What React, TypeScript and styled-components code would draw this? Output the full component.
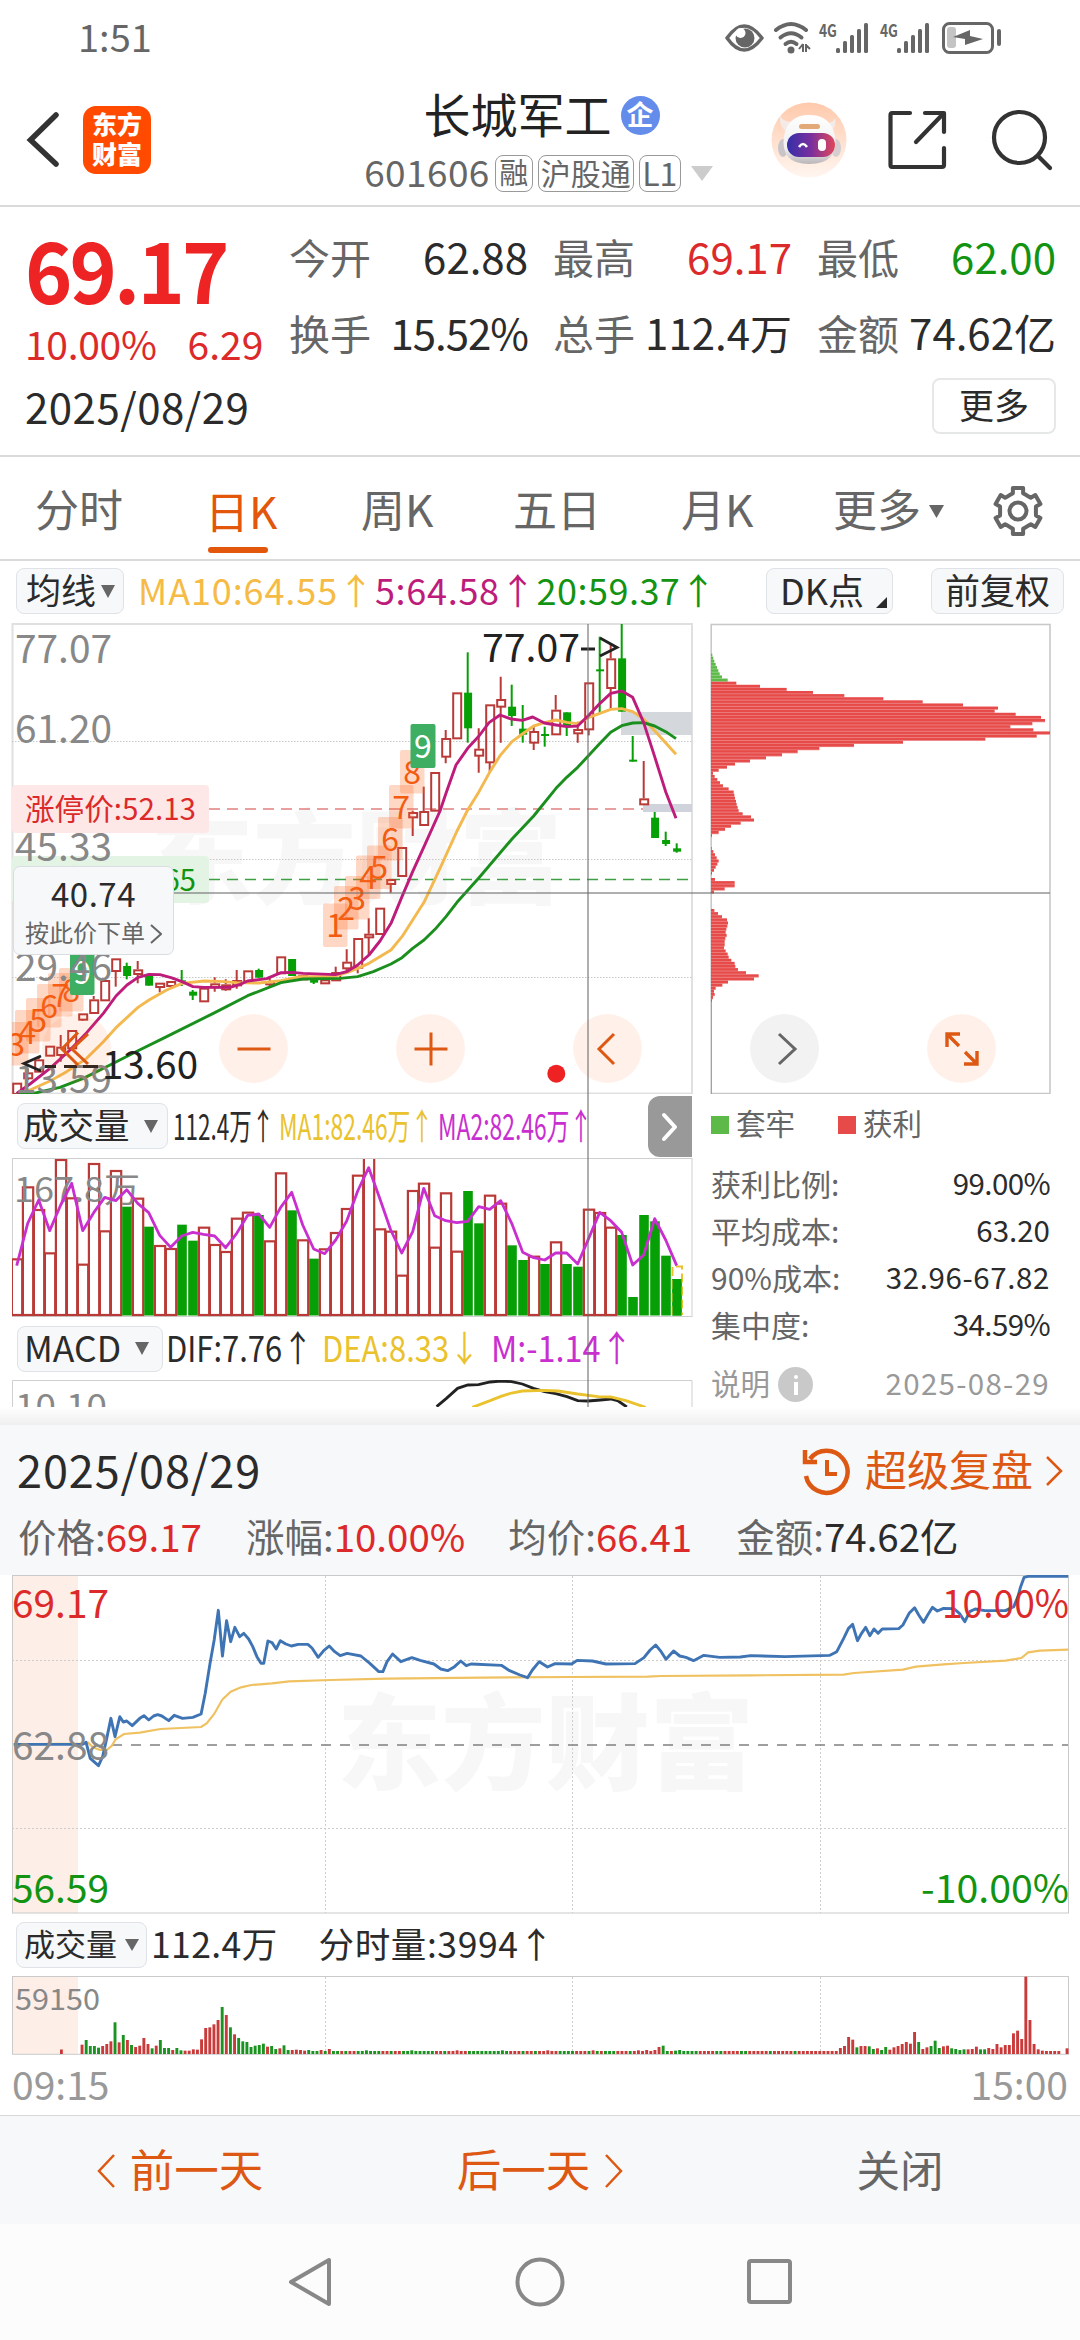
import React from 'react';
import styled, { createGlobalStyle } from 'styled-components';

const Global = createGlobalStyle`
  * { box-sizing: border-box; }
  html, body { margin: 0; padding: 0; background: #fff; }
  body, text { font-family: "Noto Sans CJK SC", "Noto Sans", sans-serif; }
  svg { display: block; flex: none; }
`;

const C = {
  red: '#dc2a2a', green: '#129412', ink: '#2b2b2b', grey: '#666', pale: '#999',
  accent: '#dd5812', candle: '#b93a37', fillGreen: '#06a006',
  ma5: '#bd1c7b', ma10: '#f3b94f', ma20: '#1b8f1e', purple: '#c92fcf', yellow: '#eac22e',
};

/* ---------- shared pieces ---------- */

const Screen = styled.div`
  width: 1080px; height: 2340px; overflow: hidden; background: #fff;
  display: flex; flex-direction: column;
`;

const Txt = styled.span<{ s: number; c?: string; w?: number; ls?: number; ml?: number }>`
  font-size: ${p => p.s}px; line-height: 1; white-space: pre; flex: none;
  margin-top: -0.12em; margin-left: ${p => p.ml ?? 0}px;
  color: ${p => p.c ?? C.ink}; font-weight: ${p => p.w ?? 400};
  letter-spacing: ${p => p.ls ?? 0}px;
`;

const Narrow = styled(Txt)<{ k: number; width: number }>`
  display: inline-block; transform: scaleX(${p => p.k}); transform-origin: 0 50%;
  width: ${p => p.width / p.k}px; margin-right: ${p => p.width - p.width / p.k}px;
`;

const Chip = styled.div<{ w: number; h?: number; pl?: number; gap?: number }>`
  width: ${p => p.w}px; height: ${p => p.h ?? 46}px; flex: none;
  display: flex; align-items: center; gap: ${p => p.gap ?? 0}px; padding-left: ${p => p.pl ?? 9}px;
  background: #f7f8fa; border: 1.5px solid #dfe2e7; border-radius: 8px;
`;
const DkChip = styled(Chip)` margin-left: auto; `;
const AdjustChip = styled(Chip)` margin: 0 16px 0 38px; `;

const Caret = ({ w = 15, h = 13, c = C.grey }: { w?: number; h?: number; c?: string }) => (
  <svg width={w} height={h}><path d={`M0 0H${w}L${w / 2} ${h}Z`} fill={c} /></svg>
);

const Label = ({ x, cy, s, c = '#888', w, end, weight, children }: {
  x: number; cy: number; s: number; c?: string; w?: number; end?: boolean; weight?: number; children: React.ReactNode;
}) => (
  <text x={x} y={cy + s * 0.367} fontSize={s} fill={c} fontWeight={weight}
    textAnchor={end ? 'end' : 'start'} textLength={w} lengthAdjust="spacingAndGlyphs">{children}</text>
);

/* ---------- status bar ---------- */

const StatusBar = styled.div`
  height: 72px; padding: 4px 78px 0 78px; display: flex; align-items: center; justify-content: space-between;
`;

const Signal = ({ x }: { x: number }) => (
  <g>
    <text x={x} y={36} fontSize={17} fontWeight={700} fill={C.grey} textLength={18} lengthAdjust="spacingAndGlyphs">4G</text>
    {[5, 12, 18, 24, 30].map((h, i) => (
      <rect key={i} x={x + 17 + i * 7} y={52 - h} width={4} height={h} rx={1.5} fill={C.grey} />
    ))}
  </g>
);

const StatusIcons = () => (
  <svg width="280" height="40" viewBox="722 17 280 40">
    <path d="M727 37Q744 13 762 37Q744 61 727 37Z" fill="none" stroke={C.grey} strokeWidth="3.500" strokeLinejoin="round" />
    <circle cx="745" cy="37" r="9.500" fill={C.grey} />
    <circle cx="740.500" cy="32" r="5" fill="#fff" />
    <g fill="none" stroke={C.grey} strokeWidth="4" strokeLinecap="round">
      <path d="M776 29Q791 17 806 29" /><path d="M780.500 36.500Q791 28 801.500 36.500" /><path d="M785.500 43Q791 38.500 796.500 43" />
    </g>
    <circle cx="791" cy="49" r="3.500" fill={C.grey} />
    <path d="M803 43V51M799 48L803 43M806 43V51M806 44L810 48" stroke={C.grey} strokeWidth="2" fill="none" />
    <Signal x={819} /><Signal x={880} />
    <rect x="943.500" y="22.500" width="49" height="29" rx="6" fill="none" stroke={C.grey} strokeWidth="3" />
    <rect x="947" y="26" width="9" height="21" rx="3" fill="#c4c4c4" />
    <path d="M953 36L970 29V35L983 38L965 44V38Z" fill={C.grey} />
    <rect x="997" y="28" width="4" height="17" rx="2" fill={C.grey} />
  </svg>
);

/* ---------- header ---------- */

const Header = styled.header`
  height: 135px; border-bottom: 2px solid #dadada; display: grid; grid-template-columns: 340px 400px 340px;
`;
const HeadLeft = styled.div`
  display: flex; align-items: flex-start; padding: 34px 0 0 26px; gap: 23px;
`;
const Logo = styled.div`
  width: 68px; height: 68px; border-radius: 13px; background: #ff4a00;
  display: flex; flex-wrap: wrap; align-content: center; justify-content: center;
  color: #fff; font-size: 25px; font-weight: 900; line-height: 30px; text-align: center; padding: 0 8px 5px;
`;
const HeadMid = styled.div` display: flex; flex-direction: column; align-items: center; padding-top: 15px; `;
const TitleRow = styled.div` display: flex; align-items: center; height: 56px; gap: 9px; padding-left: 3px; `;
const CodeRow = styled.div` display: flex; align-items: center; height: 37px; gap: 5px; margin-top: 12px; padding-right: 3px; `;
const TagCaret = styled.div` margin-left: 5px; `;
const Badge = styled.div`
  width: 39px; height: 39px; border-radius: 50%; background: #648cea; display: flex; align-items: center; justify-content: center;
`;
const Tag = styled.div<{ w: number }>`
  width: ${p => p.w}px; height: 37px; border: 1.5px solid #999; border-radius: 8px; flex: none;
  display: flex; align-items: center; justify-content: center;
`;
const HeadRight = styled.div` display: flex; align-items: flex-start; padding: 30px 0 0 31px; `;

const Robot = () => (
  <svg width="76" height="76" viewBox="0 0 76 76">
    <defs>
      <linearGradient id="halo" x1="0" y1="0" x2="0" y2="1"><stop offset="0" stopColor="#ffc9ab" /><stop offset="1" stopColor="#fff6f0" /></linearGradient>
      <linearGradient id="visor"><stop offset="0" stopColor="#352fa8" /><stop offset=".5" stopColor="#7a2f9e" /><stop offset="1" stopColor="#e0485a" /></linearGradient>
      <linearGradient id="shell" x1="0" y1="0" x2="0" y2="1"><stop offset="0" stopColor="#fff" /><stop offset=".7" stopColor="#f0eeee" /><stop offset="1" stopColor="#b9b5b8" /></linearGradient>
    </defs>
    <circle cx="38" cy="38" r="37.500" fill="url(#halo)" />
    <path d="M9 14Q8 26 17 30L24 19Q14 22 9 14ZM64 16Q66 26 58 30L53 20Q61 23 64 16Z" fill="#f4ebe8" />
    <ellipse cx="12" cy="46" rx="5" ry="9" fill="#c9c4c8" /><ellipse cx="65" cy="46" rx="5" ry="9" fill="#d5ced0" />
    <path d="M38 13Q60 13 64 34Q68 62 38 62Q9 62 13 34Q17 13 38 13Z" fill="url(#shell)" />
    <rect x="28" y="22" width="21" height="5" rx="2.500" fill="#e3a878" />
    <rect x="16" y="31" width="48" height="24" rx="12" fill="url(#visor)" />
    <path d="M28 45Q32 39 36 45" stroke="#fff" strokeWidth="2.500" fill="none" />
    <rect x="47" y="37" width="8" height="12" rx="4" fill="#fff" />
  </svg>
);

const HeadIcon = styled.svg<{ ml: number }>`
  margin-left: ${p => p.ml}px; margin-top: 6px; fill: none; stroke: #333; stroke-width: 4.2px; stroke-linecap: round; stroke-linejoin: round;
`;

const ShareIcon = () => (
  <HeadIcon ml={39} width="62" height="62" viewBox="0 0 62 62">
    <path d="M24 5H6Q4.500 5 4.500 7V57Q4.500 59 6 59H56Q58 59 58 57V40" /><path d="M39 5H58V24" /><path d="M57 6L30 34" />
  </HeadIcon>
);

const SearchIcon = () => (
  <HeadIcon ml={42} width="64" height="64" viewBox="0 0 64 64">
    <circle cx="29.500" cy="29.500" r="25.500" /><path d="M48 48L60 60" />
  </HeadIcon>
);

/* ---------- quote ---------- */

const Quote = styled.section` height: 250px; border-bottom: 2px solid #dadada; display: flex; `;
const QuoteLeft = styled.div` width: 289px; padding: 22px 0 0 25px; flex: none; `;
const QLine = styled.div<{ h: number }>` height: ${p => p.h}px; display: flex; align-items: center; `;
const QuoteRight = styled.div` flex: 1; padding: 14px 24px 0 0; display: flex; flex-direction: column; align-items: flex-end; `;
const Stats = styled.div`
  width: 767px; display: grid; grid-template-columns: repeat(3, 239px); column-gap: 25px; grid-auto-rows: 76px;
`;
const Stat = styled.div` display: flex; justify-content: space-between; align-items: center; `;
const MoreButton = styled.div`
  width: 124px; height: 56px; margin-top: 5px; border: 2px solid #e6e8e8; border-radius: 8px; display: flex; align-items: center; justify-content: center;
`;

const stats: [string, string, string, number][] = [
  ['今开', '62.88', C.ink, 0], ['最高', '69.17', C.red, 0], ['最低', '62.00', C.green, 0],
  ['换手', '15.52%', C.ink, -1], ['总手', '112.4万', C.ink, 0], ['金额', '74.62亿', C.ink, 0],
];

/* ---------- tabs ---------- */

const Tabs = styled.nav` height: 104px; border-bottom: 2px solid #dadada; display: flex; padding-left: 35px; `;
const Tab = styled.div<{ w: number }>` width: ${p => p.w}px; height: 102px; display: flex; align-items: center; gap: 8px; padding-top: 6px; `;
const ActiveTab = styled(Tab)`
  flex-direction: column; align-items: flex-start; padding-top: 36px; gap: 15px; justify-content: flex-start;
  &::after { content: ''; width: 60px; height: 6px; border-radius: 3px; background: #e2570c; margin-left: 3px; }
`;
const GearIcon = () => {
  const pts: string[] = [];
  for (let i = 0; i < 6; i++) {
    const a = (i * 60 - 90) * Math.PI / 180;
    [[-0.42, 18], [-0.28, 18.5], [-0.22, 23.5], [0.22, 23.5], [0.28, 18.5], [0.42, 18]].forEach(([d, r]) =>
      pts.push(`${26 + r * Math.cos(a + d)},${26 + r * Math.sin(a + d)}`));
  }
  return (
    <svg width="52" height="52" fill="none" stroke={C.grey} strokeWidth="4">
      <polygon points={pts.join(' ')} strokeLinejoin="round" /><circle cx="26" cy="26" r="8.500" />
    </svg>
  );
};

const Averages = styled.div` height: 62px; display: flex; align-items: center; padding-left: 16px; padding-bottom: 2px; `;
const Corner = styled.i`
  align-self: flex-end; margin: 0 0 5px 12px; border: solid transparent; border-width: 0 0 11px 11px; border-bottom-color: #2b2b2b;
`;

/* ---------- candlestick chart ---------- */

const ChartArea = styled.section` position: relative; height: 784px; overflow: hidden; display: flex; flex: none; `;
const LeftCol = styled.div` width: 693px; flex: none; `;
const RightCol = styled.div` width: 342px; margin-left: 17px; flex: none; `;

// kind, body top, body bottom, wick top, wick bottom; plot units are thirds of a pixel below y = 610
type Candle = [string, number, number, number, number];
const B = 570;
const candles: Candle[] = [
  ['r', B + 848, B + 882, B + 848, B + 882], ['r', B + 817, B + 835, B + 805, B + 840], ['r', B + 778, B + 815, B + 772, B + 815],
  ['r', B + 737, B + 767, B + 737, B + 767], ['r', B + 740, B + 765, B + 705, B + 785], ['r', B + 690, B + 745, B + 690, B + 745],
  ['r', B + 640, B + 659, B + 640, B + 662], ['r', B + 598, B + 639, B + 588, B + 639], ['r', B + 540, B + 601, B + 540, B + 601],
  ['r', B + 475, B + 513, B + 475, B + 560], ['g', B + 498, B + 528, B + 488, B + 538], ['r', B + 508, B + 522, B + 483, B + 550],
  ['g', B + 528, B + 557, B + 528, B + 557], ['r', B + 548, B + 561, B + 548, B + 577], ['r', B + 543, B + 558, B + 543, B + 558],
  ['g', B + 541, B + 545, B + 510, B + 558], ['g', B + 575, B + 587, B + 570, B + 600], ['r', B + 563, B + 604, B + 563, B + 604],
  ['r', B + 550, B + 562, B + 532, B + 575], ['r', B + 553, B + 568, B + 538, B + 572], ['r', B + 540, B + 556, B + 510, B + 566],
  ['r', B + 511, B + 545, B + 511, B + 545], ['g', B + 510, B + 533, B + 506, B + 533], ['r', B + 543, B + 553, B + 530, B + 560],
  ['r', B + 469, B + 520, B + 469, B + 520], ['g', B + 477, B + 528, B + 477, B + 528], ['r', B + 525, B + 538, B + 525, B + 538],
  ['g', B + 530, B + 548, B + 530, B + 552], ['r', B + 538, B + 550, B + 530, B + 550], ['r', B + 516, B + 541, B + 500, B + 541],
  ['r', 1055, 1075, 1018, 1085], ['r', 984, 1073, 984, 1090], ['r', 971, 982, 925, 1035], ['r', 893, 972, 893, 972],
  ['r', 807, 822, 807, 848], ['r', 711, 798, 711, 798], ['r', 606, 622, 602, 678], ['r', 603, 645, 530, 645],
  ['r', 486, 602, 486, 602], ['r', 384, 440, 360, 460], ['r', 247, 385, 247, 385], ['g', 248, 355, 127, 398],
  ['r', 416, 437, 355, 488], ['r', 283, 457, 283, 485], ['r', 267, 290, 200, 398], ['g', 290, 318, 224, 348],
  ['g', 356, 374, 285, 398], ['r', 363, 398, 350, 420], ['g', 372, 378, 350, 410], ['r', 299, 373, 255, 373],
  ['g', 307, 350, 307, 378], ['r', 357, 370, 335, 398], ['r', 217, 358, 217, 376], ['g', 178, 184, 80, 310],
  ['r', 145, 234, 100, 298], ['g', 145, 305, 42, 305], ['g', 449, 455, 378, 455], ['r', 565, 583, 453, 583],
  ['g', 623, 684, 606, 684], ['g', 690, 702, 665, 708], ['g', 715, 725, 700, 728],
];
const cx = (i: number) => 16.7 + 11 * i;

const left = (pts: number[][]) => pts.map(([x, y]) => `${x / 3},${800 + y / 3}`).join(' ');
const right = (pts: number[][]) => pts.map(([x, y]) => `${340 + x / 3},${610 + y / 3}`).join(' ');

const ma5 = left([[50, 880], [90, 852], [150, 805], [210, 750], [260, 698], [310, 640], [348, 588], [381, 555], [414, 532], [447, 523], [480, 524], [513, 533], [546, 545], [579, 560], [612, 562], [690, 562], [720, 553], [743, 543], [800, 536], [843, 518], [876, 517], [909, 520], [1006, 524]])
  + ' ' + right([[20, 1085], [53, 1065], [87, 1035], [120, 993], [153, 940], [186, 860], [218, 785], [252, 710], [300, 603], [318, 550], [348, 465], [383, 415], [417, 378], [447, 338], [480, 315], [513, 327], [547, 331], [578, 321], [613, 339], [648, 345], [681, 350], [713, 348], [747, 315], [780, 280], [812, 250], [845, 243], [878, 262], [911, 338], [944, 440], [977, 545], [1008, 625]]);
const ma10 = left([[50, 882], [90, 870], [150, 843], [200, 815], [260, 775], [310, 725], [348, 683], [414, 622], [447, 600], [500, 570], [546, 550], [612, 543], [660, 544], [710, 548], [777, 549], [843, 542], [900, 530], [1000, 530]])
  + ' ' + right([[20, 1088], [53, 1075], [87, 1060], [153, 1020], [186, 980], [252, 877], [300, 775], [351, 663], [383, 600], [417, 545], [450, 485], [480, 437], [516, 395], [547, 372], [581, 348], [613, 338], [648, 330], [681, 337], [713, 341], [747, 322], [812, 298], [845, 296], [878, 305], [911, 327], [944, 362], [1008, 433]]);
const ma20 = left([[50, 882], [110, 878], [180, 862], [250, 835], [330, 795], [414, 752], [500, 710], [640, 640], [743, 587], [843, 548], [909, 537]])
  + ' ' + right([[0, 1105], [53, 1100], [100, 1085], [153, 1062], [186, 1043], [218, 1015], [252, 990], [285, 958], [318, 920], [351, 877], [417, 803], [516, 687], [581, 618], [648, 535], [680, 502], [713, 472], [780, 400], [812, 367], [845, 347], [878, 339], [911, 338], [944, 348], [977, 365], [1008, 386]]);

const marks: [string, number, number][] = [
  ['8', 400, 750], ['7', 389, 785], ['6', 378, 817], ['5', 367, 845.5], ['4', 356, 855.5], ['3', 345, 876], ['2', 334, 886], ['1', 323, 903.5],
  ['8', 59, 968], ['7', 48, 973], ['6', 37, 984], ['5', 26, 998], ['4', 15, 1010], ['3', 4, 1022],
];

const KChart = () => (
  <svg width="693" height="471" viewBox="0 623 693 471">
    <clipPath id="plot"><rect x="12" y="623" width="681" height="471" /></clipPath>
    <Label x={150} cy={859} s={102} w={412} c="#f7f7f7" weight={900}>东方财富</Label>
    <rect x="12.500" y="624" width="679.500" height="469.500" fill="none" stroke="#e0e0e0" strokeWidth="2" />
    <g stroke="#c8c8c8" strokeDasharray="1.500 1.500"><path d="M12 741.500H692M12 859.500H692M12 977.500H692" /></g>
    <rect x="12" y="785" width="197" height="48" rx="4" fill="#fee7e7" />
    <rect x="12" y="856" width="197" height="47" rx="4" fill="#e4f4e4" />
    <Label x={25} cy={809} s={30} w={171} c={C.red}>涨停价:52.13</Label>
    <Label x={25} cy={880} s={30} w={171} c={C.green}>跌停价:42.65</Label>
    <path d="M209 809H690" stroke="#e08080" strokeWidth="1.500" strokeDasharray="11 7" />
    <path d="M209 879.500H690" stroke="#3f9f45" strokeWidth="1.500" strokeDasharray="11 7" />
    <rect x="621" y="712" width="71" height="23" fill="#d4d7dc" /><rect x="643" y="804" width="49" height="8" fill="#d0d2dc" />
    <g clipPath="url(#plot)">
      {candles.map(([k, t, b, hi, lo], i) => {
        const y = (v: number) => 610 + v / 3, x = cx(i);
        return k === 'g'
          ? <g key={i} fill={C.fillGreen}><rect x={x - 1} y={y(hi)} width={2} height={(lo - hi) / 3} /><rect x={x - 3.6} y={y(t)} width={8} height={(b - t) / 3} /></g>
          : <g key={i} stroke={C.candle} strokeWidth={2} fill="none"><path d={`M${x} ${y(hi)}V${y(t)}M${x} ${y(b)}V${y(lo)}`} /><rect x={x - 3.5} y={y(t) + 1} width={8} height={Math.max(1, (b - t) / 3 - 1)} /></g>;
      })}
      {marks.map(([n, x, y], i) => (
        <g key={i}><rect x={x} y={y} width={24.5} height={43.5} rx={2} fill="#ff6a2a" fillOpacity=".27" />
          <text x={x + 12.2} y={y + 33.5} fontSize={32} textAnchor="middle" fill="#f25c10">{n}</text></g>
      ))}
      <rect x="70" y="951" width="24.500" height="44" rx="2" fill="#3dae62" />
      <text x="82.200" y="984" fontSize="32" textAnchor="middle" fill="#fff">9</text>
      <rect x="410.500" y="724" width="25" height="44" rx="2" fill="#3dae62" />
      <text x="423" y="757.500" fontSize="32" textAnchor="middle" fill="#fff">9</text>
      <g fill="none" strokeWidth="2.900" strokeLinejoin="round">
        <polyline points={ma10} stroke={C.ma10} /><polyline points={ma20} stroke={C.ma20} /><polyline points={ma5} stroke={C.ma5} />
      </g>
    </g>
    <Label x={15} cy={649} s={39} w={97}>77.07</Label>
    <Label x={15} cy={729} s={39} w={97}>61.20</Label>
    <Label x={15} cy={847} s={39} w={97}>45.33</Label>
    <Label x={15} cy={967} s={39} w={97}>29.46</Label>
    <Label x={15} cy={1079} s={39} w={97}>13.59</Label>
    <Label x={482} cy={647.500} s={39} w={98} c="#222">77.07</Label>
    <path d="M581 649H595M600 638L617 647.500L600 656" stroke="#222" strokeWidth="2.800" fill="none" />
    <path d="M41 1056L24 1063.500L41 1071M45 1066.500H56M64 1066.500H77M83 1066.500H98" stroke="#222" strokeWidth="2.800" fill="none" />
    <Label x={102} cy={1064.500} s={39} w={96} c="#222">13.60</Label>
    <circle cx="556.300" cy="1073.700" r="9" fill="#ee2222" />
  </svg>
);

/* ---------- overlays on the chart ---------- */

const RoundButton = styled.div<{ x: number; grey?: boolean }>`
  position: absolute; left: ${p => p.x - 34.5}px; top: 391px; width: 69px; height: 69px; border-radius: 50%;
  background: ${p => (p.grey ? 'rgba(90,90,90,.08)' : 'rgba(250,100,20,.09)')};
  display: flex; align-items: center; justify-content: center;
`;
const PricePopup = styled.div`
  position: absolute; left: 13px; top: 243px; width: 161px; height: 89px; border-radius: 7px;
  background: #f7f8fa; border: 1.5px solid #dadde2;
  display: flex; flex-direction: column; align-items: center; gap: 13px; padding-top: 14px;
`;
const PopupLine = styled.div` display: flex; align-items: center; gap: 5px; `;
const CrossV = styled.div` position: absolute; left: 587px; top: 1px; width: 2px; height: 783px; background: rgba(110,110,110,.55); `;
const CrossH = styled.div` position: absolute; left: 174px; top: 269px; width: 876px; height: 2px; background: rgba(110,110,110,.55); `;
const Expand = styled.div`
  position: absolute; left: 648px; top: 473px; width: 44px; height: 61px; border-radius: 12px 0 0 12px; background: #999;
  display: flex; align-items: center; justify-content: center;
`;

const Icon = ({ d, c = C.accent, sw = 3, s = 36 }: { d: string; c?: string; sw?: number; s?: number }) => (
  <svg width={s} height={s} viewBox="0 0 36 36"><path d={d} fill="none" stroke={c} strokeWidth={sw} /></svg>
);

/* ---------- volume + MACD ---------- */

const Legend = styled.div<{ h: number }>` height: ${p => p.h}px; display: flex; align-items: center; padding-left: 17px; `;

const vols = 'r508 r292 r360 r490 r210 r325 r524 r222 r424 r243 g350 r326 g410 r468 r477 g404 g452 r413 r465 r486 r386 r368 g375 r454 r250 g361 r451 g506 r478 r429 r357 r257 r200 r418 r425 r557 r303 r281 r473 r310 r485 g303 g400 r317 r341 g466 g510 r500 g522 r457 g522 g530 r359 r369 r413 g435 g621 g375 g394 g497 g567'.split(' ');
const volMa = [527, 400, 330, 422, 345, 280, 422, 368, 322, 332, 299, 340, 368, 436, 472, 438, 427, 433, 438, 473, 430, 376, 372, 412, 352, 307, 405, 477, 491, 450, 393, 303, 233, 325, 420, 489, 425, 295, 377, 392, 398, 394, 350, 358, 332, 400, 487, 503, 510, 489, 489, 522, 445, 367, 392, 427, 525, 495, 386, 450, 527];

const VolumeChart = () => (
  <svg width="693" height="159" viewBox="0 1158 693 159">
    <clipPath id="vol"><rect x="12" y="1159" width="680" height="158" /></clipPath>
    <rect x="12.500" y="1158.500" width="679.500" height="158" fill="none" stroke="#cfcfcf" />
    <g clipPath="url(#vol)">
      {vols.map((v, i) => {
        const y = 1090 + Number(v.slice(1)) / 3, x = cx(i);
        return v[0] === 'g'
          ? <rect key={i} x={x - 4.5} y={y} width={9.6} height={1315.5 - y} fill={C.fillGreen} />
          : <rect key={i} x={x - 4.8} y={y} width={10.3} height={1315 - y} fill="#fff" stroke={C.candle} strokeWidth={2.2} />;
      })}
      <path d="M672.500 1315V1266.500H682V1315" fill="none" stroke={C.yellow} strokeWidth="2" strokeDasharray="9 4" />
      <rect x="672.500" y="1279" width="9" height="36.500" fill={C.fillGreen} />
    </g>
    <Label x={14} cy={1190} s={34} w={126}>167.8万</Label>
    <polyline points={volMa.map((v, i) => `${cx(i)},${1090 + v / 3}`).join(' ')} fill="none" stroke={C.purple} strokeWidth="2.800" strokeLinejoin="round" />
  </svg>
);

const m = (p: number[][]) => p.map(([x, y]) => `${x / 2.24},${1090 + y / 3}`).join(' ');
const MacdChart = () => (
  <svg width="693" height="27" viewBox="0 1380 693 27">
    <path d="M12.500 1410V1380.500H692V1410" fill="none" stroke="#cfcfcf" />
    <Label x={15} cy={1406} s={34} w={92}>10.10</Label>
    <polyline points={m([[978, 950], [1000, 925], [1025, 895], [1048, 885], [1072, 884], [1098, 876], [1122, 873], [1146, 875], [1170, 882], [1195, 895], [1220, 905], [1245, 911], [1270, 920], [1294, 932], [1317, 933], [1345, 930], [1368, 927], [1385, 933], [1404, 951]])} fill="none" stroke="#222" strokeWidth="2.800" />
    <polyline points={m([[1058, 952], [1098, 932], [1122, 919], [1146, 909], [1170, 903], [1220, 901], [1250, 903], [1294, 912], [1340, 920], [1368, 921], [1402, 932], [1446, 952]])} fill="none" stroke={C.yellow} strokeWidth="2.800" />
  </svg>
);

/* ---------- cost distribution ---------- */

const segments: [number, string, number[]][] = [
  [131, '#5dba49', [67, 70, 73, 77, 81, 85, 89, 96, 113]],
  [215, '#e64a49', [139, 210, 290, 369, 463, 580, 698, 819, 924, 914, 977, 1053, 1065, 1027, 961, 1030, 1080, 1040, 886, 639, 492, 388, 323, 276, 228, 180, 135, 111, 86, 69, 74, 82, 90, 99, 116, 131, 133, 135, 138, 140, 143, 146, 158, 183, 192, 152, 123, 105, 86, 66]],
  [711, '#e64a49', [65, 70, 75, 80, 86, 82, 77, 72, 66]],
  [804, '#e64a49', [75, 134, 134, 104, 72]],
  [897, '#e64a49', [73, 84, 96, 111, 114, 112, 109, 107, 110, 106, 104, 104, 102, 107, 113, 116, 124, 134, 136, 144, 168, 206, 192, 114, 97, 77, 72, 74, 69, 66]],
];

const CostChart = () => (
  <svg width="342" height="471" viewBox="710 623 342 471">
    <rect x="711.200" y="624.500" width="338.800" height="469" fill="none" stroke="#c9c9c9" strokeWidth="1.600" />
    <path d="M711.500 1000V1094" stroke="#e64a49" strokeWidth=".8" opacity=".6" />
    {segments.map(([y0, c, rows]) => rows.map((x, i) => (
      <g key={`${y0}-${i}`}>
        <rect x={711} y={610 + (y0 + i * 9.33) / 3} width={(x - 63) / 3} height={3.2} fill={c} />
        <rect x={711} y={610 + (y0 + i * 9.33) / 3 + 2.5} width={(x - 63) / 3} height={0.7} fill="#fff" opacity=".35" />
      </g>
    )))}
  </svg>
);

const KeyRow = styled.div` height: 67px; display: flex; align-items: center; padding: 0 0 5px 1px; `;
const Square = styled.i<{ c: string; ml?: number }>` width: 18px; height: 18px; background: ${p => p.c}; margin: 0 7px 0 ${p => p.ml ?? 0}px; `;
const InfoRow = styled.div<{ h?: number }>` height: ${p => p.h ?? 47}px; display: flex; align-items: center; justify-content: space-between; padding: 0 2px 0 1px; `;
const InfoLeft = styled.div` display: flex; align-items: center; gap: 8px; `;
const InfoDot = styled.div`
  width: 35px; height: 35px; border-radius: 50%; background: #c9c9c9; display: flex; flex-direction: column; align-items: center; padding-top: 8px; gap: 3px;
  &::before { content: ''; width: 4px; height: 4px; border-radius: 2px; background: #fff; }
  &::after { content: ''; width: 4px; height: 13px; background: #fff; }
`;

const costs: [string, string, number][] = [
  ['获利比例:', '99.00%', -0.6], ['平均成本:', '63.20', 0], ['90%成本:', '32.96-67.82', 0.6], ['集中度:', '34.59%', -0.6],
];

/* ---------- intraday sheet ---------- */

const Shade = styled.div` height: 18px; background: linear-gradient(#fff, #efefef); flex: none; `;
const SheetHead = styled.div` height: 150px; background: #f7f8fa; flex: none; `;
const SheetTitle = styled.div` height: 92px; display: flex; align-items: center; justify-content: space-between; padding: 0 16px 0 17px; `;
const Replay = styled.div` display: flex; align-items: center; `;
const Arrow = styled.svg` margin-left: 13px; `;
const SheetStats = styled.div` height: 42px; display: flex; align-items: center; padding-left: 18px; `;

const q = (p: number[][]) => p.map(([x, y]) => `${x / 1.452},${1410 + y / 3}`).join(' ');
const price = q([[20, 1003], [120, 1003], [125, 997], [131, 1045], [143, 1067], [149, 1040], [155, 985], [161, 925], [167, 980], [174, 920], [179, 936], [184, 933], [192, 947], [203, 925], [209, 917], [216, 930], [223, 918], [229, 914], [235, 918], [245, 932], [253, 916], [265, 925], [280, 922], [292, 912], [298, 850], [305, 760], [311, 690], [317, 601], [323, 738], [329, 632], [335, 695], [341, 652], [348, 680], [354, 670], [361, 687], [367, 710], [373, 740], [379, 760], [383, 760], [389, 693], [395, 698], [401, 717], [407, 692], [415, 702], [423, 708], [433, 703], [447, 703], [453, 714], [462, 742], [470, 722], [478, 708], [486, 725], [494, 737], [504, 730], [524, 738], [537, 760], [550, 785], [556, 785], [562, 755], [570, 732], [582, 755], [598, 743], [610, 751], [630, 762], [640, 777], [650, 782], [660, 770], [669, 753], [677, 767], [684, 762], [728, 766], [740, 782], [755, 795], [766, 803], [773, 780], [783, 755], [795, 771], [806, 761], [830, 762], [838, 751], [860, 753], [880, 762], [922, 761], [935, 743], [944, 720], [952, 705], [960, 725], [967, 748], [978, 723], [987, 738], [996, 742], [1007, 752], [1022, 736], [1045, 742], [1075, 741], [1090, 737], [1140, 740], [1205, 736], [1215, 725], [1225, 685], [1232, 655], [1238, 643], [1245, 692], [1251, 670], [1257, 652], [1263, 677], [1269, 657], [1275, 670], [1281, 657], [1305, 656], [1311, 645], [1320, 610], [1328, 593], [1334, 615], [1341, 637], [1347, 615], [1354, 592], [1361, 603], [1370, 595], [1385, 596], [1393, 610], [1401, 635], [1408, 605], [1416, 597], [1430, 602], [1460, 602], [1472, 590], [1478, 560], [1482, 530], [1487, 502], [1493, 499], [1551, 499]]);
const average = q([[20, 1003], [120, 1001], [128, 998], [135, 1012], [145, 1020], [155, 1020], [162, 1008], [168, 988], [180, 972], [203, 968], [233, 957], [292, 951], [300, 940], [311, 912], [323, 868], [335, 845], [350, 832], [365, 825], [395, 820], [420, 814], [480, 810], [560, 806], [700, 803], [830, 801], [940, 800], [960, 798], [1090, 796], [1225, 794], [1240, 789], [1311, 779], [1330, 770], [1370, 763], [1400, 759], [1460, 752], [1483, 744], [1493, 727], [1510, 722], [1551, 719]]);

const DayChart = () => (
  <svg width="1080" height="339" viewBox="0 1575 1080 339">
    <rect x="12" y="1576" width="66" height="337" fill="#fdeee8" />
    <Label x={337} cy={1744} s={104} w={417} c="#f7f7f7" weight={900}>东方财富</Label>
    <g stroke="#cdcdcd" strokeDasharray="2 2"><path d="M325.500 1576V1913M572.500 1576V1913M820.500 1576V1913M12 1660.500H1068M12 1828.500H1068" /></g>
    <rect x="12.500" y="1575.500" width="1056" height="337.500" fill="none" stroke="#cacaca" />
    <path d="M112 1745H1068" stroke="#808080" strokeWidth="1.600" strokeDasharray="10 9" />
    <polyline points={average} fill="none" stroke="#f0c160" strokeWidth="2.200" />
    <polyline points={price} fill="none" stroke="#3f74b4" strokeWidth="2.900" strokeLinejoin="round" />
    <Label x={12} cy={1604} s={39} w={97} c={C.red}>69.17</Label>
    <Label x={12} cy={1746} s={39} w={97}>62.88</Label>
    <Label x={12} cy={1889} s={39} w={97} c={C.green}>56.59</Label>
    <Label x={1069} cy={1604} s={39} w={127} end c={C.red}>10.00%</Label>
    <Label x={1069} cy={1889} s={39} w={148} end c={C.green}>-10.00%</Label>
  </svg>
);

const DayLegend = styled.div` height: 62px; display: flex; align-items: center; padding: 0 0 1px 16px; flex: none; `;

const opening = '28r 42g 24g 24g 19g 24r 30r 38r 95g 35r 57g 42r 27g 21r 25r 48r 30r 17g 25r 42g 18g 18g 12r 18g 11g 10r 10r 14r 13r 44r 78r 80r 89r 102r 141g 117r 80g 59r 48g 38g 36g 21g 25g 27g 31g 22r 24g 15g 17r 26g 12g 12r 13r 12r 10r 12g 9g 9g 12r 9g 15r'.split(' ');
const noon = 'ggrgrrggggggrrgrrggggggggrrgrrrrrggggggggggrrrgrrgrrrrrggggrrrgrgrgggrrrgrrr'.split('').map((k, i) => `${i % 11 === 8 ? 11 : 9}${k}`);
const later = '12r 9r 12r 21r 25g 9g 9r 10g 12g 9g 9g 9g 9g'.split(' ');
const drift = 'rrrrggrrrrggrrrrrgrrrrrgrrrrrrrr'.split('').map(k => `9${k}`);
const closing = '9r 9r 18r 24r 51r 43r 20g 24r 24r 23g 15g 17r 12g 21g 13r 20r 24r 30r 36r 31r 66r 36g 15r 20r 24g 40g 18g 23r 25r 17g 15g 12g 14g 14r 15r 22r 14g 14g 18r 15r 30r 20r 27r 27r 62r 70r 45r 232r 102r 30r 14r 10r 9r 9r 9r 9r 0r 17r'.split(' ');
const dayVols = [...opening, ...noon, ...later, ...drift, ...closing];

const DayVolume = () => (
  <svg width="1080" height="79" viewBox="0 1976 1080 79">
    <rect x="12" y="1977" width="66" height="77" fill="#fdeee8" />
    <path d="M325.500 1977V2054M572.500 1977V2054M820.500 1977V2054" stroke="#cdcdcd" strokeDasharray="2 2" />
    <rect x="12.500" y="1976.500" width="1056" height="77.800" fill="none" stroke="#cacaca" />
    <rect x="60" y="2049.500" width="2.800" height="4.500" fill="#c93434" />
    {dayVols.map((v, i) => {
      const h = parseInt(v, 10) / 3;
      return <rect key={i} x={80.6 + i * (985 / (dayVols.length - 1))} y={2054 - h} width={2.9} height={h} fill={v.endsWith('g') ? '#1b9320' : '#c93a3a'} />;
    })}
    <Label x={15} cy={1999} s={29} w={85}>59150</Label>
  </svg>
);

const Times = styled.div` height: 60px; display: flex; align-items: center; justify-content: space-between; padding: 2px 12px 0; flex: none; `;
const Footer = styled.footer`
  height: 109px; background: #f7f8fa; border-top: 1.5px solid #d8d8d8; display: grid; grid-template-columns: repeat(3, 1fr); flex: none;
`;
const FootItem = styled.div` display: flex; align-items: center; justify-content: center; gap: 14px; padding-top: 2px; `;
const NavBar = styled.div` flex: 1; background: #fcfcfc; display: flex; align-items: center; justify-content: center; gap: 180px; `;

export default function App() {
  return (
    <Screen>
      <Global />
      <StatusBar><Txt s={38} c={C.grey}>1:51</Txt><StatusIcons /></StatusBar>
      <Header>
        <HeadLeft>
          <svg width="34" height="68" viewBox="0 0 34 68"><path d="M30 9L4.500 34L30 58" fill="none" stroke="#333" strokeWidth="5.500" strokeLinecap="round" strokeLinejoin="miter" /></svg>
          <Logo>东方<br />财富</Logo>
        </HeadLeft>
        <HeadMid>
          <TitleRow><Txt s={47} c="#222">长城军工</Txt><Badge><Txt s={27} c="#fff" w={700}>企</Txt></Badge></TitleRow>
          <CodeRow>
            <Txt s={37} c={C.grey} ls={0.4}>601606</Txt>
            <Tag w={38}><Txt s={29} c={C.grey}>融</Txt></Tag>
            <Tag w={96}><Txt s={30} c={C.grey}>沪股通</Txt></Tag>
            <Tag w={42}><Txt s={32} c={C.grey}>L1</Txt></Tag>
            <TagCaret><Caret w={22} h={15} c="#ccc" /></TagCaret>
          </CodeRow>
        </HeadMid>
        <HeadRight><Robot /><ShareIcon /><SearchIcon /></HeadRight>
      </Header>

      <Quote>
        <QuoteLeft>
          <QLine h={85}><Narrow s={85} c="#ee2424" w={700} ls={-3} k={0.945} width={210}>69.17</Narrow></QLine>
          <QLine h={63}><Txt s={39} c={C.red} ls={-0.3}>10.00%</Txt><Txt s={39} c={C.red} ml={31}>6.29</Txt></QLine>
          <QLine h={63}><Txt s={42} ls={0.5}>2025/08/29</Txt></QLine>
        </QuoteLeft>
        <QuoteRight>
          <Stats>
            {stats.map(([k, v, c, ls]) => <Stat key={k}><Txt s={41} c={C.grey}>{k}</Txt><Txt s={42} c={c} ls={ls}>{v}</Txt></Stat>)}
          </Stats>
          <MoreButton><Txt s={35}>更多</Txt></MoreButton>
        </QuoteRight>
      </Quote>

      <Tabs>
        <Tab w={170}><Txt s={44} c={C.grey}>分时</Txt></Tab>
        <ActiveTab w={156}><Txt s={44} c="#e2570c">日K</Txt></ActiveTab>
        <Tab w={152}><Txt s={44} c={C.grey}>周K</Txt></Tab>
        <Tab w={168}><Txt s={44} c={C.grey}>五日</Txt></Tab>
        <Tab w={152}><Txt s={44} c={C.grey}>月K</Txt></Tab>
        <Tab w={159}><Txt s={44} c={C.grey}>更多</Txt><Caret /></Tab>
        <Tab w={52}><GearIcon /></Tab>
      </Tabs>

      <Averages>
        <Chip w={108} gap={5}><Txt s={35}>均线</Txt><Caret w={14} /></Chip>
        <Txt s={36} c="#f5bb45" ls={0.9} ml={14}>MA10:64.55↑</Txt>
        <Txt s={36} c={C.ma5} ls={0.7}>5:64.58↑</Txt>
        <Txt s={36} c={C.green} ls={0.5}>20:59.37↑</Txt>
        <DkChip w={127} pl={13}><Txt s={36}>DK点</Txt><Corner /></DkChip>
        <AdjustChip w={133} pl={13}><Txt s={35}>前复权</Txt></AdjustChip>
      </Averages>

      <ChartArea>
        <LeftCol>
          <KChart />
          <Legend h={64}>
            <Chip w={151} pl={5} gap={14}><Txt s={35.5}>成交量</Txt><Caret w={14} /></Chip>
            <Narrow s={36} k={0.625} width={106} ml={5}>112.4万↑</Narrow>
            <Narrow s={36} k={0.635} width={159} c={C.yellow}>MA1:82.46万↑</Narrow>
            <Narrow s={36} k={0.635} width={160} c={C.purple}>MA2:82.46万↑</Narrow>
          </Legend>
          <VolumeChart />
          <Legend h={63}>
            <Chip w={146} pl={6} gap={14}><Txt s={35.5}>MACD</Txt><Caret w={14} /></Chip>
            <Narrow s={36} k={0.86} width={156} ml={3}>DIF:7.76↑</Narrow>
            <Narrow s={36} k={0.86} width={169} c={C.yellow}>DEA:8.33↓</Narrow>
            <Narrow s={36} k={0.9} width={150} c={C.purple}>M:-1.14↑</Narrow>
          </Legend>
          <MacdChart />
        </LeftCol>
        <RightCol>
          <CostChart />
          <KeyRow>
            <Square c="#5dba49" /><Txt s={29.5} c={C.grey}>套牢</Txt>
            <Square c="#e64a49" ml={43} /><Txt s={29.5} c={C.grey}>获利</Txt>
          </KeyRow>
          {costs.map(([k, v, ls]) => <InfoRow key={k}><Txt s={30} c={C.grey}>{k}</Txt><Txt s={29.5} ls={ls}>{v}</Txt></InfoRow>)}
          <InfoRow h={71}><InfoLeft><Txt s={29.5} c={C.pale}>说明</Txt><InfoDot /></InfoLeft><Txt s={29.5} c={C.pale} ls={1.3}>2025-08-29</Txt></InfoRow>
        </RightCol>
        <RoundButton x={76.5}><Icon d="M19 1.500L3 18L19 34M29 3L13 18L29 33" /></RoundButton>
        <RoundButton x={253.5}><Icon d="M1.500 18H34.500" /></RoundButton>
        <RoundButton x={430.5}><Icon d="M1.500 18H34.500M18 1.500V34.500" /></RoundButton>
        <RoundButton x={607.5}><Icon d="M24 3L9 18L24 33" /></RoundButton>
        <RoundButton x={784.5} grey><Icon d="M12 3L28 18L12 33" c={C.grey} /></RoundButton>
        <RoundButton x={961.5}><Icon d="M3 16V3H16M3 3L15 15M33 20V33H20M33 33L21 21" sw={3.4} /></RoundButton>
        <CrossV /><CrossH />
        <PricePopup>
          <Txt s={33} ls={0.5}>40.74</Txt>
          <PopupLine><Txt s={24} c={C.grey}>按此价下单</Txt>
            <svg width="12" height="20"><path d="M1 1L11 10L1 19" fill="none" stroke={C.grey} strokeWidth="2" /></svg></PopupLine>
        </PricePopup>
        <Expand><svg width="18" height="30"><path d="M3 3L14 15L3 27" fill="none" stroke="#fff" strokeWidth="4" strokeLinecap="round" strokeLinejoin="round" /></svg></Expand>
      </ChartArea>

      <Shade />
      <SheetHead>
        <SheetTitle>
          <Txt s={45} ls={0.9}>2025/08/29</Txt>
          <Replay>
            <svg width="52" height="50" viewBox="0 0 52 50" fill="none" stroke={C.accent} strokeWidth="4.500">
              <path d="M5 30A21 21 0 1 0 9 13" /><path d="M4 4V16H16" /><path d="M26 14V28H36" strokeWidth="4" />
            </svg>
            <Txt s={42} c={C.accent} ml={12}>超级复盘</Txt>
            <Arrow width="18" height="30"><path d="M1 1L15 15L1 29" fill="none" stroke={C.accent} strokeWidth="2.500" /></Arrow>
          </Replay>
        </SheetTitle>
        <SheetStats>
          <Txt s={38.5} c={C.grey}>价格:</Txt><Txt s={38.5} c={C.red}>69.17</Txt>
          <Txt s={38.5} c={C.grey} ml={44}>涨幅:</Txt><Txt s={38.5} c={C.red}>10.00%</Txt>
          <Txt s={38.5} c={C.grey} ml={43}>均价:</Txt><Txt s={38.5} c={C.red}>66.41</Txt>
          <Txt s={38.5} c={C.grey} ml={44}>金额:</Txt><Txt s={38.5}>74.62亿</Txt>
        </SheetStats>
      </SheetHead>
      <DayChart />
      <DayLegend>
        <Chip w={131} pl={7} gap={8}><Txt s={31}>成交量</Txt><Caret w={14} h={12} /></Chip>
        <Txt s={35.5} ls={0.4} ml={4}>112.4万</Txt><Txt s={35.5} ls={0.6} ml={41}>分时量:3994↑</Txt>
      </DayLegend>
      <DayVolume />
      <Times><Txt s={39} c={C.pale}>09:15</Txt><Txt s={39} c={C.pale}>15:00</Txt></Times>
      <Footer>
        <FootItem>
          <svg width="19" height="34"><path d="M17 1L2 17L17 33" fill="none" stroke={C.accent} strokeWidth="2.500" /></svg>
          <Txt s={44.5} c={C.accent}>前一天</Txt>
        </FootItem>
        <FootItem>
          <Txt s={44.5} c={C.accent}>后一天</Txt>
          <svg width="19" height="34"><path d="M2 1L17 17L2 33" fill="none" stroke={C.accent} strokeWidth="2.500" /></svg>
        </FootItem>
        <FootItem><Txt s={43.5} c={C.grey}>关闭</Txt></FootItem>
      </Footer>
      <NavBar>
        <svg width="50" height="50" fill="none" stroke="#888" strokeWidth="4" strokeLinejoin="round"><path d="M44 3V47L6 25Z" /></svg>
        <svg width="50" height="50" fill="none" stroke="#888" strokeWidth="4"><circle cx="25" cy="25" r="22.500" /></svg>
        <svg width="50" height="50" fill="none" stroke="#888" strokeWidth="4"><rect x="4" y="4" width="41" height="41" rx="2" /></svg>
      </NavBar>
    </Screen>
  );
}
